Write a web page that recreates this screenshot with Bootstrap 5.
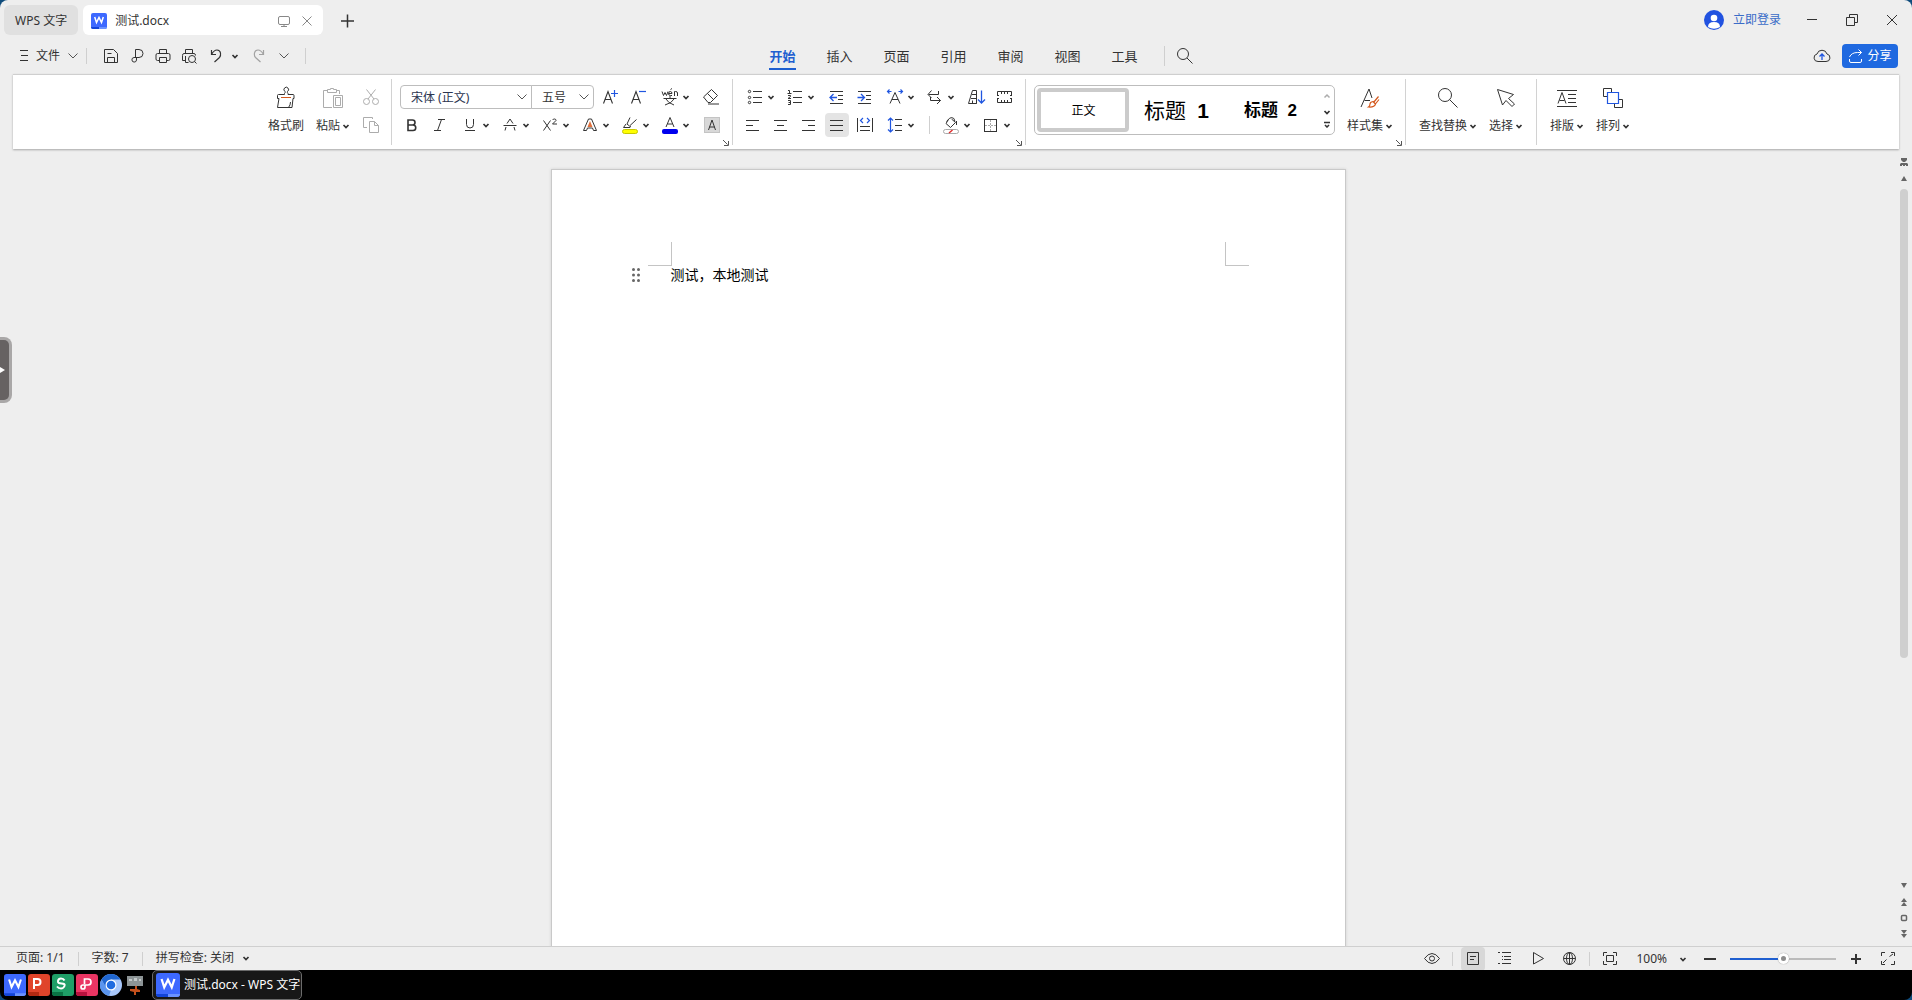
<!DOCTYPE html>
<html lang="zh-CN">
<head>
<meta charset="utf-8">
<meta name="viewport" content="width=device-width, initial-scale=1">
<title>测试.docx - WPS 文字</title>
<link rel="stylesheet" href="https://cdn.jsdelivr.net/npm/bootstrap@5.3.0/dist/css/bootstrap.min.css">
<style>
:root{--ink:#333;--blue:#2056e0;--chrome:#eee}
body{font-family:"Noto Sans","Noto Sans CJK SC",sans-serif;font-size:12px;line-height:18px;color:var(--ink);background:#0f4c7c}
.app-shell{background:var(--chrome);border-radius:8px 8px 0 0}
button{font:inherit;color:inherit;background:none;border:0;padding:0}
svg{display:block;flex:none}
.ic{width:24px;height:24px;fill:none;stroke:var(--ink);stroke-width:1}
.crt{width:8px;height:8px;fill:none;stroke:var(--ink);stroke-width:2}
.thin{width:10px;height:8px;fill:none;stroke:#555;stroke-width:1}
.dim{opacity:.4}
.faint{stroke:#888}
.accent{stroke:var(--blue)}
.title-bar{height:40px;padding-left:4px;gap:4px}
.doc-tab{height:30px;border-radius:6px;padding:1px 11px 0;background:#e0e0e0}
.doc-tab.current{background:#fff;width:240px;padding:1px 4px 0 8px;margin-left:1px}
.logo16{width:16px;height:16px}
.win-btn{width:40px;height:40px}
.sign-in{color:#3a6cc8;text-decoration:none;gap:9px;margin-right:7px}
.menu-bar{height:34px;padding:0 14px 2px 12px}
.side-zone{flex:1 1 0}
.vline{width:1px;background:#cfcfcf;flex:none}
.v16{height:16px}
.quick{margin-left:-2px}
.menu-tabs{width:490px;padding-left:44px}
.menu-tabs .nav-link{width:57px;padding:5px 0 0;color:var(--ink);font-size:13px;line-height:18px}
.menu-tabs .nav-link span{display:block;width:27px;margin:0 auto;border-bottom:2px solid transparent;padding-bottom:2px;height:23px;text-align:center;white-space:nowrap}
.menu-tabs .nav-link.active{color:#1f5fd0;font-weight:700}
.menu-tabs .nav-link.active span{border-color:#1f5fd0}
.menu-tabs .vline{height:20px;margin:0 8px 0 11px}
.share-btn{height:24px;width:56px;border-radius:4px;background:#1f69e0;color:#fff;gap:4px}
.ribbon{margin:0 13px;height:75px;background:#fff;border-top:1px solid #cfcfcf;box-shadow:0 1px 2px rgba(0,0,0,.3)}
.rgroup{position:relative;padding:8px 6px 0;flex:none}
.rgroup+.rgroup::before{content:"";position:absolute;left:-1px;top:4px;height:66px;width:1px;background:#d2d2d2}
.g-clip{width:136px;padding-left:12px}
.g-font{width:341px}
.g-para{width:293px}
.g-style{width:380px;padding-left:8px}
.g-find{width:131px;padding-left:13px;gap:12px}
.g-sort{width:119px;padding-left:13px;gap:12px}
.tool-row{height:28px}
.tool{width:24px;height:24px;margin:0 2px;border-radius:4px;flex:none}
.tool.on{background:#e4e4e4}
.tool-split{width:36px;height:24px;margin:0 2px;padding:0 4px 0 2px}
.tool-split+.tool{margin-left:6px}
.tool-row>.vline{height:18px;margin:0 5px 0 10px}
.tool-big{padding-top:3px;gap:7px;height:57px;white-space:nowrap}
.tool-big .cap{gap:2px}
.launcher{position:absolute;right:4px;bottom:3px;width:6px;height:6px}
.launcher svg{width:6px;height:6px;stroke:#555;fill:none}
.font-row{padding-left:2px}
.combo{height:24px;border:1px solid #bdbdbd;background:#fff;color:var(--ink);font-size:12px;line-height:18px;padding:1px 10px 0;appearance:none}
.pick{position:relative}
.pick .thin{position:absolute;right:5px;top:8px;pointer-events:none}
.combo.face{width:132px;border-radius:4px 0 0 4px;color:#2b3550}
.combo.size{width:63px;margin-left:-1px;border-radius:0 4px 4px 0}
.gallery{width:301px;height:50px;border:1px solid #bdbdbd;border-radius:5px;padding:2px;margin-top:2px}
.gallery button{width:94px;height:44px;padding:1px 0 0 1px;color:#000;white-space:pre}
.gallery .picked{width:92px;border:4px solid #cbcbcb;border-radius:4px}
.gallery .h-one{font-size:21px;font-weight:400;line-height:30px}
.gallery .h-two{font-size:17px;font-weight:700;line-height:24px;font-family:"Liberation Sans","Noto Sans CJK SC",sans-serif}
.gallery .h-one b{font-family:"Liberation Sans",sans-serif}
.canvas-area{padding-top:20px}
.paper{flex:0 0 795px;background:#fff;border:1px solid #c9c9c9;height:1125px;box-shadow:0 0 3px rgba(0,0,0,.12)}
.crops{padding:72px 96px 0}
.crop-mark{width:24px;height:24px;border:0 solid #c4c4c4;border-bottom-width:1px;border-right-width:1px}
.crop-mark+.crop-mark{border-right-width:0;border-left-width:1px}
.doc-line{padding-left:80px;gap:29px;color:#000;font-size:14px;line-height:18px}
.scroll-col{width:16px;padding:8px 4px 7px}
.scroll-col svg{width:8px;height:10px;fill:#666;stroke:none;margin-bottom:6px}
.scroll-col svg:last-child{margin-bottom:0}
.thumb{width:8px;border-radius:4px;background:#cfcfcf;height:60%}
.side-handle{position:absolute;left:0;top:337px;width:12px;height:66px;background:#666262;border:3px solid #a9a7a7;border-left:0;border-radius:0 8px 8px 0}
.side-handle svg{width:5px;height:8px;fill:#fff}
.status-bar{height:24px;border-top:1px solid #cfcfcf;padding:0 12px 0 16px}
.status-bar .vline{height:14px;margin:0 8px}
.status-bar>.vline{margin:0 13px}
.status-bar>span,.status-bar>button{padding-bottom:1px}
.st-btn{width:24px;height:24px;border-radius:4px}
.st-btn.on{background:#d8d8d8}
.zoom-pick{margin-left:14px}
.zoom-pick .crt{margin:0 11px 0 12px}
.zoom-slide{width:106px;height:12px;appearance:none;background:linear-gradient(#1f5fd0,#1f5fd0) left center/50% 2px no-repeat,linear-gradient(#bbb,#bbb) center/100% 2px no-repeat}
.zoom-slide::-webkit-slider-thumb{appearance:none;width:11px;height:11px;border-radius:50%;border:3px solid #fff;background:#8c8c8c;box-shadow:0 0 1px #777}
.task-bar{height:30px;background:#000;color:#fff;padding-left:4px;gap:2px;border-radius:0 0 8px 8px}
.task-bar .app{width:22px;height:22px}
.task-open{width:150px;height:30px;border:1px solid #6b6b6b;border-radius:5px;background:#181818;padding-left:3px;gap:4px;white-space:nowrap}
</style>
<script src="https://cdn.jsdelivr.net/npm/bootstrap@5.3.0/dist/js/bootstrap.bundle.min.js"></script>
</head>
<body class="vh-100 overflow-hidden d-flex flex-column">
<svg width="0" height="0" class="position-absolute" aria-hidden="true">
<symbol id="caret" viewBox="0 0 8 8"><path d="M1.500 3 4 5.500 6.500 3" stroke-width="1.700"/></symbol>
<symbol id="chev" viewBox="0 0 10 8"><path d="M.5 1.500 5 6l4.500-4.500"/></symbol>
<symbol id="wlogo" viewBox="0 0 16 16"><rect width="16" height="16" rx="2" fill="#3d69ff"/><path d="M0 14h8v2H2a2 2 0 0 1-2-2z" fill="#1244d8"/><path d="M8 14h8a2 2 0 0 1-2 2H8z" fill="#6b93ff"/><path d="M3.700 4 5.500 9.500 8 4.500 10.500 9.500 12.300 4" fill="none" stroke="#fff" stroke-width="1.500"/></symbol>
</svg>

<div class="app-shell flex-grow-1 d-flex flex-column overflow-hidden">
<header class="title-bar d-flex align-items-center flex-shrink-0">
  <button class="doc-tab">WPS 文字</button>
  <div class="doc-tab current d-flex align-items-center">
    <svg class="logo16"><use href="#wlogo"/></svg><span class="ms-1 ps-1">测试.docx</span>
    <svg class="ic faint ms-auto me-n1" viewBox="0 0 24 24"><path d="M9 7.500h8q1.500 0 1.500 1.500v5q0 1.500-1.500 1.500H9q-1.500 0-1.500-1.500V9q0-1.500 1.500-1.500zM13 15.500v2M10 17.500h6"/></svg>
    <button aria-label="关闭标签"><svg class="ic faint" viewBox="0 0 24 24"><path d="m7.500 7.500 9 9m0-9-9 9"/></svg></button>
  </div>
  <button class="ms-1 ps-1" aria-label="新建"><svg class="ic" viewBox="0 0 24 24"><path d="M12.500 6.500v13M6 13h13" stroke-width="1.500"/></svg></button>
  <a href="#" class="sign-in d-flex align-items-center ms-auto"><svg width="20" height="20" viewBox="0 0 20 20"><circle cx="10" cy="10" r="10" fill="#2152e0"/><circle cx="10" cy="8" r="3.300" fill="#fff"/><path d="M4 17q0-5 6-5t6 5q-6 3.500-12 0z" fill="#fff"/></svg>立即登录</a>
  <div class="d-flex">
    <button class="win-btn d-flex align-items-center justify-content-center" aria-label="最小化"><svg class="ic" viewBox="0 0 24 24"><path d="M7 11.500h10"/></svg></button>
    <button class="win-btn d-flex align-items-center justify-content-center" aria-label="还原"><svg class="ic" viewBox="0 0 24 24"><path d="M6.500 9.500h8v8h-8zM9.500 9.500v-3h8v8h-3"/></svg></button>
    <button class="win-btn d-flex align-items-center justify-content-center" aria-label="关闭"><svg class="ic" viewBox="0 0 24 24"><path d="m7 7 10 10m0-10L7 17"/></svg></button>
  </div>
</header>

<nav class="menu-bar d-flex align-items-center flex-shrink-0">
  <div class="side-zone d-flex align-items-center">
    <button class="d-flex align-items-center"><svg class="ic" viewBox="0 0 24 24"><path d="M8 6.500h8M9 11.500h7M8 16.500h8"/></svg>文件<svg class="thin ms-2"><use href="#chev"/></svg></button>
    <span class="vline v16 ms-2 me-2"></span>
    <button class="ps-1" aria-label="保存"><svg class="ic" viewBox="0 0 24 24"><path d="M5.500 5.500h9l4 4v9h-13zM8.500 18.500v-5h7v5M8.500 9.500h4" stroke-linejoin="round"/></svg></button>
    <button class="ms-1 quick" aria-label="输出为PDF"><svg class="ic" viewBox="0 0 24 24"><path d="M8.500 13.500V5.500H12a4 4 0 0 1 0 8H7a2.300 2.300 0 1 0 2.500 2.500v-2.500"/></svg></button>
    <button aria-label="打印"><svg class="ic" viewBox="0 0 24 24"><path d="M8.500 9.500v-4h7v4M8 16.500H6.500q-1.500 0-1.500-1.500v-4q0-1.500 1.500-1.500h11q1.500 0 1.500 1.500v4q0 1.500-1.500 1.500H16M8.500 13.500h7v5h-7z"/></svg></button>
    <button class="ms-1" aria-label="打印预览"><svg class="ic" viewBox="0 0 24 24"><path d="M6.500 9.500v-4h7v4M6 16.500H3.500v-5q0-2 1.500-2h10q1.500 0 1.500 2M6.500 12v6.500h3"/><circle cx="13" cy="15" r="3.500"/><path d="m15.500 17.500 2 2"/></svg></button>
    <button class="d-flex align-items-center" aria-label="撤销"><svg class="ic" viewBox="0 0 24 24"><path d="M8.500 6v4.500H13M8.500 10.500Q11 6 14 6t3.500 3-1 4.500l-5 4.500" stroke-width="1.200"/></svg><svg class="crt ms-1"><use href="#caret"/></svg></button>
    <button class="ms-2" aria-label="恢复"><svg class="ic dim" viewBox="0 0 24 24"><path d="M16.500 6v4.500H12M16.500 10.500Q14 6 11 6T7.500 9t1 4.500l5 4.500" stroke-width="1.200"/></svg></button>
    <button class="ms-2" aria-label="更多"><svg class="thin"><use href="#chev"/></svg></button>
    <span class="vline v16 ms-3"></span>
  </div>
  <div class="menu-tabs nav flex-nowrap align-items-center">
    <a class="nav-link active" href="#"><span>开始</span></a><a class="nav-link" href="#"><span>插入</span></a><a class="nav-link" href="#"><span>页面</span></a><a class="nav-link" href="#"><span>引用</span></a><a class="nav-link" href="#"><span>审阅</span></a><a class="nav-link" href="#"><span>视图</span></a><a class="nav-link" href="#"><span>工具</span></a>
    <span class="vline"></span>
    <button aria-label="搜索"><svg class="ic" viewBox="0 0 24 24"><circle cx="10" cy="10" r="5.500"/><path d="m14 14 5.500 5.500"/></svg></button>
  </div>
  <div class="side-zone d-flex align-items-center justify-content-end gap-2">
    <button aria-label="云同步"><svg class="ic" viewBox="0 0 24 24"><path d="M8 17.500a3.800 3.800 0 0 1-1-7.500 5.200 5.200 0 0 1 10 0 3.800 3.800 0 0 1-1 7.500z"/><path class="accent" d="M12 16v-6m-2.500 2.500L12 10l2.500 2.500" stroke-width="1.300"/></svg></button>
    <button class="share-btn d-flex align-items-center justify-content-center"><svg width="15" height="15" viewBox="0 0 15 15" fill="none" stroke="#fff"><path d="M1.500 10v2q0 1.500 1.500 1.500h9q1.500 0 1.500-1.500v-2M1.500 8q2-4.500 8-4.500h4M10.500.5l3 3-3 3"/></svg>分享</button>
  </div>
</nav>

<section class="ribbon d-flex justify-content-center flex-shrink-0">
  <div class="rgroup g-clip d-flex">
    <button class="tool-big d-flex flex-column align-items-center"><svg class="ic" viewBox="0 0 24 24"><path d="M10.500 7.500q1-1 .5-2a2.300 2.300 0 1 1 2.500 0q-.5 1 .5 2v1h5q1 0 1 1v3h-1l-1 9H3.500l1.500-9H3.500v-3q0-1 1-1h6v-1M16.500 16q0 3-2 5.500"/><path d="M7 11.500h10" stroke="#d4581c"/></svg><span class="cap">格式刷</span></button>
    <button class="tool-big d-flex flex-column align-items-center ms-2 ps-1"><svg class="ic dim" viewBox="0 0 24 24"><path d="M7 4.500H2.500v17H11M15 4.500h3.500V8M6.500 3.500h3v-1h3v1h3v3h-9zM12.500 9.500h9v12h-9zM14.500 11.500h5v8h-5z"/></svg><span class="cap d-flex align-items-center">粘贴<svg class="crt"><use href="#caret"/></svg></span></button>
    <div class="ms-1 ps-1">
      <div class="tool-row d-flex align-items-center"><button class="tool" aria-label="剪切"><svg class="ic dim" viewBox="0 0 24 24"><path d="M6.500 4.500 14 14M15.500 4.500 8 14"/><circle cx="6.500" cy="16.500" r="3"/><circle cx="15.500" cy="16.500" r="3"/></svg></button></div>
      <div class="tool-row d-flex align-items-center"><button class="tool" aria-label="复制"><svg class="ic dim" viewBox="0 0 24 24"><path d="M7 14.500H3.500v-10h9V6M9.500 8.500h5l4 4v7h-9zM14.500 8.500v4h4"/></svg></button></div>
    </div>
  </div>

  <div class="rgroup g-font">
    <div class="tool-row font-row d-flex align-items-center">
      <label class="pick d-block"><select class="combo face" aria-label="字体"><option>宋体 (正文)</option></select><svg class="thin"><use href="#chev"/></svg></label>
      <label class="pick d-block me-1"><select class="combo size" aria-label="字号"><option>五号</option></select><svg class="thin"><use href="#chev"/></svg></label>
      <button class="tool" aria-label="增大字号"><svg class="ic" viewBox="0 0 24 24"><path d="M3.500 18.500 8 6.500l4.500 12M5 14.500h6" stroke-width="1.100"/><path class="accent" d="M11 8.500h7M14.500 5v7" stroke-width="1.200"/></svg></button>
      <button class="tool" aria-label="减小字号"><svg class="ic" viewBox="0 0 24 24"><path d="M3.500 18.500 8 6.500l4.500 12M5 14.500h6" stroke-width="1.100"/><path class="accent" d="M11 6.500h7" stroke-width="1.200"/></svg></button>
      <button class="tool-split d-flex align-items-center" aria-label="拼音指南"><svg class="ic" viewBox="0 0 24 24"><path d="M4 6.500l1.500 4 1.500-3 1.500 3 1.500-4M10.500 8.500h3.500q0-2-1.700-2t-1.800 2 2 2h1.500M12.500 4.500l1.500-1M16.500 11V6.500h1q2 0 2 1.500v3M5.500 13.500h13M12 11v2.500M8 14q2 4 8 6M16 14q-2 4-9 6"/></svg><svg class="crt"><use href="#caret"/></svg></button>
      <button class="tool" aria-label="清除格式"><svg class="ic" viewBox="0 0 24 24"><path d="m3.500 12 8-7.500 6 6-7 7H8zM7.500 8.500l6 6M8 19h11" stroke-linejoin="round"/></svg></button>
    </div>
    <div class="tool-row d-flex align-items-center">
      <button class="tool" aria-label="加粗"><svg class="ic" viewBox="0 0 24 24"><path d="M8 7h4.500a2.500 2.500 0 0 1 0 5H8zM8 12h5a2.700 2.700 0 0 1 0 5.500H8z" stroke-width="1.600"/></svg></button>
      <button class="tool" aria-label="倾斜"><svg class="ic" viewBox="0 0 24 24"><path d="M10 6.500h7M6 17.500h7M13.500 6.500l-4 11"/></svg></button>
      <button class="tool-split d-flex align-items-center" aria-label="下划线"><svg class="ic" viewBox="0 0 24 24"><path d="M8.500 6v5.500a3.500 3.500 0 0 0 7 0V6M7 17.500h10"/></svg><svg class="crt"><use href="#caret"/></svg></button>
      <button class="tool-split d-flex align-items-center" aria-label="删除线"><svg class="ic" viewBox="0 0 24 24"><path d="M9 10.500l3-4.500 3 4.500M5.500 12.500h13M8 14l-1 3.500M16 14l1 3.500"/></svg><svg class="crt"><use href="#caret"/></svg></button>
      <button class="tool-split d-flex align-items-center" aria-label="上标"><svg class="ic" viewBox="0 0 24 24"><path d="m5.500 7.500 7 10m0-10-7 10M14.500 7q.5-1 2-1t1.500 1.500L14.500 11H19"/></svg><svg class="crt"><use href="#caret"/></svg></button>
      <button class="tool-split d-flex align-items-center" aria-label="文字效果"><svg class="ic" viewBox="0 0 24 24"><path d="M5.500 17.500 10.500 6h3l5 11.500h-3l-1-2.500h-5l-1 2.500z"/><path d="M12 8l2.500 6h-5z" fill="#e0703c" stroke="none"/></svg><svg class="crt"><use href="#caret"/></svg></button>
      <button class="tool-split d-flex align-items-center" aria-label="突出显示"><svg class="ic" viewBox="0 0 24 24"><path d="M12 4.500 9 11l2.500 2L18.500 6.500M8 11l-2.500 3.500H12L12.500 13"/><rect x="4.500" y="16.500" width="15" height="4" rx="2" fill="#ff0" stroke="#c8c800"/></svg><svg class="crt"><use href="#caret"/></svg></button>
      <button class="tool-split d-flex align-items-center" aria-label="字体颜色"><svg class="ic" viewBox="0 0 24 24"><path d="M8 14l4-9.500L16 14M9.500 11h5"/><rect x="4" y="16" width="16" height="5" rx="2" fill="#00e" stroke="none"/></svg><svg class="crt"><use href="#caret"/></svg></button>
      <button class="tool" aria-label="字符底纹"><svg class="ic" viewBox="0 0 24 24"><rect x="4.500" y="4.500" width="15" height="15" fill="#d8d8d8" stroke="#c4c4c4"/><path d="M8.500 17 12 7l3.500 10M9.500 14h5"/></svg></button>
    </div>
    <button class="launcher" aria-label="字体设置"><svg viewBox="0 0 6 6"><path d="m0 0 4.500 4.500M1 5.500h4.500V1"/></svg></button>
  </div>

  <div class="rgroup g-para">
    <div class="tool-row d-flex align-items-center">
      <button class="tool-split d-flex align-items-center" aria-label="项目符号"><svg class="ic" viewBox="0 0 24 24"><path d="M10 6.500h9M10 12.500h9M10 17.500h9"/><circle cx="6.500" cy="6.500" r="1.200"/><circle cx="6.500" cy="12.500" r="1.200"/><circle cx="6.500" cy="17.500" r="1.200"/></svg><svg class="crt"><use href="#caret"/></svg></button>
      <button class="tool-split d-flex align-items-center" aria-label="编号"><svg class="ic" viewBox="0 0 24 24"><path d="M10 6.500h9M10 12.500h9M10 17.500h9M5 5.500h1.500v3M4.500 8.500h4M5 10.500h2.500v1L5 13.500h3M5 15.500h2.500v4H5M5.500 17.500h2"/></svg><svg class="crt"><use href="#caret"/></svg></button>
      <button class="tool" aria-label="减少缩进"><svg class="ic" viewBox="0 0 24 24"><path d="M5 6.500h13M13 10.500h5M13 14.500h5M5 18.500h13"/><path class="accent" d="M12 12.500H5m3.500-3.500L5 12.500 8.500 16" stroke-width="1.300"/></svg></button>
      <button class="tool" aria-label="增加缩进"><svg class="ic" viewBox="0 0 24 24"><path d="M5 6.500h13M13 10.500h5M13 14.500h5M5 18.500h13"/><path class="accent" d="M4.500 12.500h7M8 9l3.500 3.500L8 16" stroke-width="1.300"/></svg></button>
      <button class="tool-split d-flex align-items-center" aria-label="中文版式"><svg class="ic" viewBox="0 0 24 24"><path d="M7 18.500 12 7.500l5 11M9 14.500h6"/><path class="accent" d="M4.500 6.500h4M15.500 6.500h4M6.500 4.500l-2 2 2 2M17.500 4.500l2 2-2 2" stroke-width="1.200"/></svg><svg class="crt"><use href="#caret"/></svg></button>
      <button class="tool-split d-flex align-items-center" aria-label="换行"><svg class="ic" viewBox="0 0 24 24"><path d="M15.500 6v3.500h-10M8.500 5.500l-3.500 4 3.500 3.500M7.500 12v3.500h10M14 12l3.500 3.500L14 19"/></svg><svg class="crt"><use href="#caret"/></svg></button>
      <button class="tool" aria-label="排序"><svg class="ic" viewBox="0 0 24 24"><path d="m3.500 18.500 4-13h4v13h-4v-3M7 9.500h4.500M6 13.500h5.500M3.500 18.500h8"/><path class="accent" d="M16.500 5.500v12.500M13 14.500l3.500 3.500 3.500-3.500" stroke-width="1.300"/></svg></button>
      <button class="tool" aria-label="标尺"><svg class="ic" viewBox="0 0 24 24"><path d="M4.500 10.500v-4h14v4M4.500 13.500v4h14v-4M8.500 7v2M11.500 7v2M14.500 7v2M8.500 15v2M11.500 15v2M14.500 15v2M4 10.500h2M17 10.500h2M4 13.500h2M17 13.500h2"/></svg></button>
    </div>
    <div class="tool-row d-flex align-items-center">
      <button class="tool" aria-label="左对齐"><svg class="ic" viewBox="0 0 24 24"><path d="M5 7.500h13M5 12.500h7M5 17.500h13"/></svg></button>
      <button class="tool" aria-label="居中"><svg class="ic" viewBox="0 0 24 24"><path d="M5 7.500h13M8 12.500h7M5 17.500h13"/></svg></button>
      <button class="tool" aria-label="右对齐"><svg class="ic" viewBox="0 0 24 24"><path d="M5 7.500h13M11 12.500h7M5 17.500h13"/></svg></button>
      <button class="tool on" aria-label="两端对齐"><svg class="ic" viewBox="0 0 24 24"><path d="M5 7.500h13M5 12.500h13M5 17.500h13"/></svg></button>
      <button class="tool" aria-label="分散对齐"><svg class="ic" viewBox="0 0 24 24"><path d="M4.500 5v14M19.500 5v14M7 13.500h10M7 17.500h10"/><path class="accent" d="m10 5-2.500 2.500L10 10M14 5l2.500 2.500L14 10" stroke-width="1.200"/></svg></button>
      <button class="tool-split d-flex align-items-center" aria-label="行距"><svg class="ic" viewBox="0 0 24 24"><path d="M12 6.500h7M12 12.500h7M12 17.500h7"/><path class="accent" d="M7.500 5v14M5 7.500 7.500 5 10 7.500M5 16.500 7.500 19l2.500-2.500" stroke-width="1.200"/></svg><svg class="crt"><use href="#caret"/></svg></button>
      <span class="vline"></span>
      <button class="tool-split d-flex align-items-center" aria-label="底纹"><svg class="ic" viewBox="0 0 24 24"><path d="M7.500 8.500q3-4 5-4 3 0 3.500 4M9.500 6.500l-2.500 4 4.500 4 5-5-4-3.500M17.500 8v4"/><rect x="4.500" y="16.500" width="15" height="4" rx="2" stroke="#aaa" fill="#fff"/><path d="m10 20 3.500-3" stroke="#e03030" stroke-width="1.500"/></svg><svg class="crt"><use href="#caret"/></svg></button>
      <button class="tool-split d-flex align-items-center" aria-label="边框"><svg class="ic" viewBox="0 0 24 24"><path d="M11.500 7v11M6 12.500h11" stroke="#aaa" stroke-dasharray="2 1"/><rect x="5.500" y="6.500" width="12" height="12"/></svg><svg class="crt"><use href="#caret"/></svg></button>
    </div>
    <button class="launcher" aria-label="段落设置"><svg viewBox="0 0 6 6"><path d="m0 0 4.500 4.500M1 5.500h4.500V1"/></svg></button>
  </div>

  <div class="rgroup g-style d-flex">
    <div class="gallery d-flex">
      <button class="picked">正文</button>
      <button class="h-one">标题 <b> 1</b></button>
      <button class="h-two">标题  2</button>
      <div class="d-flex flex-column align-items-center justify-content-between flex-grow-1 py-1 ps-1">
        <svg class="crt dim" viewBox="0 0 8 8"><path d="M1.500 5.500 4 3l2.500 2.500" stroke-width="1.500"/></svg>
        <svg class="crt mt-1"><use href="#caret"/></svg>
        <svg class="crt" viewBox="0 0 8 8"><path d="M1 2.500h6M2 5l2 2 2-2" stroke-width="1.500"/></svg>
      </div>
    </div>
    <button class="tool-big d-flex flex-column align-items-center ms-2 ps-1"><svg class="ic" viewBox="0 0 24 24"><path d="M3 21 11 3l3 9M6.500 14.500H12"/><path d="m20.500 10.500-5 6M21 13.500l-4 5M15 15.500l2.500 2.500q-1 3.500-7 3 1.500-1 1.500-3t3-2.500z" stroke="#d4581c" stroke-width="1.200"/></svg><span class="cap d-flex align-items-center">样式集<svg class="crt"><use href="#caret"/></svg></span></button>
    <button class="launcher" aria-label="样式设置"><svg viewBox="0 0 6 6"><path d="m0 0 4.500 4.500M1 5.500h4.500V1"/></svg></button>
  </div>

  <div class="rgroup g-find d-flex">
    <button class="tool-big d-flex flex-column align-items-center"><svg class="ic" viewBox="0 0 24 24"><circle cx="9" cy="9" r="6.500"/><path d="m13.500 13.500 8 8"/></svg><span class="cap d-flex align-items-center">查找替换<svg class="crt"><use href="#caret"/></svg></span></button>
    <button class="tool-big d-flex flex-column align-items-center"><svg class="ic" viewBox="0 0 24 24"><path d="m3.500 3.500 16 5-5 4 6 5.500-2.500 2.500-6-6-3.500 4.500z"/></svg><span class="cap d-flex align-items-center">选择<svg class="crt"><use href="#caret"/></svg></span></button>
  </div>
  <div class="rgroup g-sort d-flex">
    <button class="tool-big d-flex flex-column align-items-center"><svg class="ic" viewBox="0 0 24 24"><path d="M2 4.500h20M2 20.500h20M13 8.500h8M13 12.500h8M13 16.500h8M3 17.500l4-11 4 11M4.500 14.500h5"/></svg><span class="cap d-flex align-items-center">排版<svg class="crt"><use href="#caret"/></svg></span></button>
    <button class="tool-big d-flex flex-column align-items-center"><svg class="ic" viewBox="0 0 24 24"><path d="M6 10.500H2.500v-8h8V6M18 13.500h3.500v8h-8V18"/><path class="accent" d="M6.500 6.500h11v11h-11z" stroke-width="1.200"/></svg><span class="cap d-flex align-items-center">排列<svg class="crt"><use href="#caret"/></svg></span></button>
  </div>
</section>

<main class="flex-grow-1 d-flex overflow-hidden">
  <div class="canvas-area flex-grow-1 d-flex justify-content-center overflow-hidden">
    <article class="paper">
      <div class="crops d-flex justify-content-between"><div class="crop-mark"></div><div class="crop-mark"></div></div>
      <div class="doc-line d-flex align-items-center"><svg width="10" height="16" viewBox="0 0 10 16" fill="#666"><circle cx="1.500" cy="2.500" r="1.500"/><circle cx="6.500" cy="2.500" r="1.500"/><circle cx="1.500" cy="8" r="1.500"/><circle cx="6.500" cy="8" r="1.500"/><circle cx="1.500" cy="13.500" r="1.500"/><circle cx="6.500" cy="13.500" r="1.500"/></svg><span>测试，本地测试</span></div>
    </article>
  </div>
  <div class="scroll-col d-flex flex-column align-items-center flex-shrink-0">
    <svg viewBox="0 0 8 10"><path d="M1 1h6v2L5 5H3L1 3zM0 9V7l1-1h6l1 1v2H6V8H5v1H3V8H2v1z"/></svg>
    <svg viewBox="0 0 8 10"><path d="M1 8h6L4 3z"/></svg>
    <div class="thumb flex-shrink-0"></div>
    <svg class="mt-auto" viewBox="0 0 8 10"><path d="M1 2h6L4 7z"/></svg>
    <svg viewBox="0 0 8 10"><path d="M1 5h6L4 1zM1 9h6L4 5z"/></svg>
    <svg viewBox="0 0 8 10"><rect x="1.500" y="2.500" width="5" height="5" rx="1" fill="none" stroke="#666" stroke-width="1.500"/></svg>
    <svg viewBox="0 0 8 10"><path d="M1 1h6L4 5zM1 5h6L4 9z"/></svg>
  </div>
</main>

<footer class="status-bar d-flex align-items-center flex-shrink-0">
  <span>页面: 1/1</span><i class="vline"></i><span>字数: 7</span><i class="vline"></i>
  <button class="d-flex align-items-center">拼写检查: 关闭<svg class="crt ms-2"><use href="#caret"/></svg></button>
  <div class="ms-auto d-flex align-items-center">
    <button class="st-btn" aria-label="护眼模式"><svg class="ic" viewBox="0 0 24 24"><path d="M4.500 11.500q3.500-5 7.500-5t7.500 5q-3.500 5-7.500 5t-7.500-5z"/><circle cx="12" cy="11.500" r="2.500"/></svg></button>
    <span class="vline"></span>
    <button class="st-btn on" aria-label="页面视图"><svg class="ic" viewBox="0 0 24 24"><path d="M6.500 5.500h11v12h-11zM9 9.500h6M9 12.500h4"/></svg></button>
    <button class="st-btn ms-2" aria-label="大纲"><svg class="ic" viewBox="0 0 24 24"><path d="M5 5.500h2M9 5.500h9M9 9.500h1M11 9.500h7M9 12.500h1M11 12.500h7M5 16.500h2M9 16.500h9"/></svg></button>
    <button class="st-btn ms-2" aria-label="阅读"><svg class="ic" viewBox="0 0 24 24"><path d="m8.500 5.500 10 6-10 5.500z"/></svg></button>
    <button class="st-btn ms-2" aria-label="网页视图"><svg class="ic" viewBox="0 0 24 24"><circle cx="12.500" cy="11.500" r="6"/><ellipse cx="12.500" cy="11.500" rx="3" ry="6"/><path d="M12.500 5.500v12M6.500 11.500h12"/></svg></button>
    <span class="vline"></span>
    <button class="st-btn" aria-label="适应页面"><svg class="ic" viewBox="0 0 24 24"><path d="M5.500 9V5.500H9M15 5.500h3.500V9M18.500 14v3.500H15M9 17.500H5.500V14M8.500 8.500h7v6h-7z"/></svg></button>
    <button class="zoom-pick d-flex align-items-center">100%<svg class="crt"><use href="#caret"/></svg></button>
    <button class="st-btn" aria-label="缩小"><svg class="ic" viewBox="0 0 24 24"><path d="M6 12h12" stroke-width="2"/></svg></button>
    <input type="range" class="zoom-slide mx-2" min="0" max="200" value="100" aria-label="缩放">
    <button class="st-btn" aria-label="放大"><svg class="ic" viewBox="0 0 24 24"><path d="M7 12h10M12 7v10" stroke-width="2"/></svg></button>
    <button class="st-btn ms-2" aria-label="全屏"><svg class="ic" viewBox="0 0 24 24"><path d="M5.500 9V5.500H9M15 5.500h3.500V9M18.500 14v3.500H15M9 17.500H5.500V14M7 16l3.500-3.500M13.500 9.500 17 7"/></svg></button>
  </div>
</footer>
</div>

<button class="side-handle d-flex align-items-center" aria-label="展开侧栏"><svg viewBox="0 0 5 8"><path d="M0 1 5 4 0 7z"/></svg></button>

<div class="task-bar d-flex align-items-center flex-shrink-0">
  <button aria-label="文字"><svg class="app"><use href="#wlogo"/></svg></button>
  <button aria-label="演示"><svg class="app" viewBox="0 0 22 22"><rect width="22" height="22" rx="3" fill="#e0442a"/><path d="M0 18h11v4H3q-3 0-3-3z" fill="#b32a12"/><path d="M6 15V5h3.500a3 3 0 0 1 0 6H6" fill="none" stroke="#fff" stroke-width="2"/></svg></button>
  <button aria-label="表格"><svg class="app" viewBox="0 0 22 22"><rect width="22" height="22" rx="3" fill="#1f9e67"/><path d="M0 18h11v4H3q-3 0-3-3z" fill="#0a7344"/><path d="M12.500 6.500q-1-2-3.500-2T6 7t3.500 2.500T12.500 12 9 14.500 5 12.500" fill="none" stroke="#fff" stroke-width="2"/></svg></button>
  <button aria-label="PDF"><svg class="app" viewBox="0 0 22 22"><rect width="22" height="22" rx="3" fill="#ea3563"/><path d="M0 18h11v4H3q-3 0-3-3z" fill="#b8123e"/><path d="M8.500 10V5H12a3 3 0 0 1 0 6H7A2 2 0 1 0 9 13v-2" fill="none" stroke="#fff" stroke-width="1.700"/></svg></button>
  <button aria-label="浏览器"><svg class="app" viewBox="0 0 22 22"><circle cx="11" cy="11" r="11" fill="#a8c7fa"/><path d="M1.500 5.500A11 11 0 0 1 20.500 5.500H11L6 14z" fill="#1f66d0"/><path d="M1.500 5.500 6.500 14q2 2 4.500 2l-2 6A11 11 0 0 1 1.500 5.500z" fill="#5a95ee"/><circle cx="11" cy="11" r="5.500" fill="#fff"/><circle cx="11" cy="11" r="4.300" fill="#1f6be0"/></svg></button>
  <button class="me-1" aria-label="工具"><svg class="app" viewBox="0 0 22 22"><path d="M3 2h16v10H3z" fill="#8d9496"/><path d="M5 5h3v2H5zM10 4h3v3h-3zM15 5h2v2h-2z" fill="#c4c9ca"/><path d="M6 15h5v-3h2v3l3 1v2h-4v3h-2v-3L6 17z" fill="#c4501c"/></svg></button>
  <button class="task-open d-flex align-items-center"><svg width="24" height="24"><use href="#wlogo"/></svg>测试.docx - WPS 文字</button>
</div>
</body>
</html>
